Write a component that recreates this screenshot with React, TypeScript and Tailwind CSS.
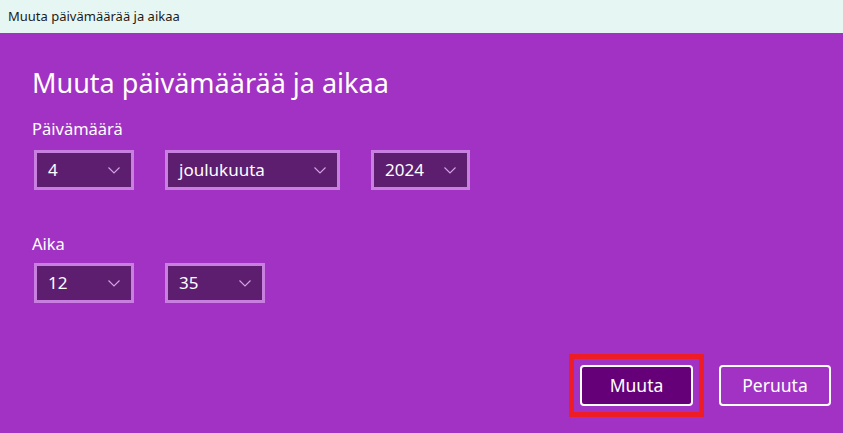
function Chevron() {
  return (
    <svg width="12" height="7" viewBox="0 0 12 7" fill="none" className="shrink-0">
      <polyline points="0.5,0.5 6,6 11.5,0.5" stroke="#d3a5e3" strokeWidth="1.1" />
    </svg>
  )
}

function Dropdown({ value, width }: { value: string; width: string }) {
  return (
    <div className={`${width} h-[40px] border-[3px] border-[#c97fe0] bg-[#5d1e70] flex items-center justify-between pl-[11px] pr-[11px]`}>
      <span className="text-[17px] leading-[22px] text-white">{value}</span>
      <Chevron />
    </div>
  )
}

export default function App() {
  return (
    <div className="w-[843px] h-[433px] flex flex-col bg-[#a132c3] font-['Noto_Sans',sans-serif] overflow-hidden">
      <div className="h-[33px] shrink-0 bg-[#e6f7f3] flex items-center pl-[8px] text-[13px] text-[#1b1b1b]">
        Muuta päivämäärää ja aikaa
      </div>

      <div className="flex-1 flex flex-col pl-[32px] pr-[12px]">
        <h1 className="mt-[32px] text-[27px] leading-[36px] text-white font-normal">
          Muuta päivämäärää ja aikaa
        </h1>

        <div className="mt-[17px] text-[16.5px] leading-[22px] text-white">Päivämäärä</div>
        <div className="mt-[10px] ml-[2px] flex gap-[31px]">
          <Dropdown value="4" width="w-[100px]" />
          <Dropdown value="joulukuuta" width="w-[175px]" />
          <Dropdown value="2024" width="w-[99px]" />
        </div>

        <div className="mt-[43px] text-[16.5px] leading-[22px] text-white">Aika</div>
        <div className="mt-[8px] ml-[2px] flex gap-[31px]">
          <Dropdown value="12" width="w-[100px]" />
          <Dropdown value="35" width="w-[100px]" />
        </div>

        <div className="mt-auto mb-[16px] flex justify-end items-center gap-[15px]">
          <div className="border-[5px] border-[#ee1c24] p-[6px]">
            <button className="w-[113px] h-[41px] rounded-[4px] border-2 border-white bg-[#650079] text-white text-[17.5px]">
              Muuta
            </button>
          </div>
          <button className="w-[112px] h-[41px] rounded-[4px] border-2 border-white bg-[#a132c3] text-white text-[17.5px]">
            Peruuta
          </button>
        </div>
      </div>
    </div>
  )
}
